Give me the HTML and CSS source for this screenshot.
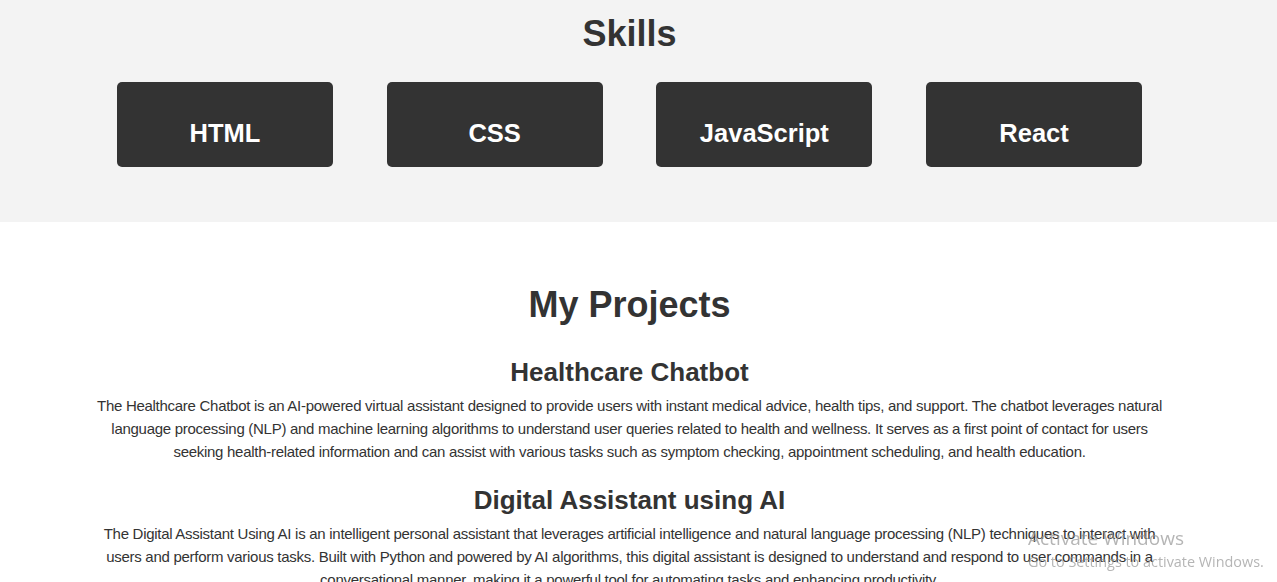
FILE: index.html
```html
<!DOCTYPE html>
<html lang="en">
<head>
<meta charset="utf-8">
<title>Portfolio</title>
<link rel="stylesheet" href="styles.css">
</head>
<body>
<section class="skills">
  <div class="wrap">
    <h2 class="section-title">Skills</h2>
    <div class="skill-list">
      <div class="skill"><h3>HTML</h3></div>
      <div class="skill"><h3>CSS</h3></div>
      <div class="skill"><h3>JavaScript</h3></div>
      <div class="skill"><h3>React</h3></div>
    </div>
  </div>
</section>
<section class="projects">
  <div class="wrap">
    <h2 class="section-title">My Projects</h2>
    <div class="project">
      <h3>Healthcare Chatbot</h3>
      <p>The Healthcare Chatbot is an AI-powered virtual assistant designed to provide users with instant medical advice, health tips, and support. The chatbot leverages natural language processing (NLP) and machine learning algorithms to understand user queries related to health and wellness. It serves as a first point of contact for users seeking health-related information and can assist with various tasks such as symptom checking, appointment scheduling, and health education.</p>
    </div>
    <div class="project">
      <h3>Digital Assistant using AI</h3>
      <p>The Digital Assistant Using AI is an intelligent personal assistant that leverages artificial intelligence and natural language processing (NLP) techniques to interact with users and perform various tasks. Built with Python and powered by AI algorithms, this digital assistant is designed to understand and respond to user commands in a conversational manner, making it a powerful tool for automating tasks and enhancing productivity.</p>
    </div>
  </div>
</section>
<div class="watermark">
  <div class="wm-title">Activate Windows</div>
  <div class="wm-sub">Go to Settings to activate Windows.</div>
</div>
</body>
</html>
```

FILE: styles.css
```css
* { box-sizing: border-box; }

body {
  margin: 0;
  font-family: "Liberation Sans", Arial, sans-serif;
  color: #333;
  background: #fff;
}

.wrap {
  width: 1259px;
}

.section-title {
  margin: 0;
  font-size: 36px;
  line-height: 42px;
  font-weight: bold;
  text-align: center;
  color: #333;
}

.skills {
  background: #f3f3f3;
  padding: 13px 0 55px;
}

.skill-list {
  display: flex;
  justify-content: center;
  gap: 53.7px;
  margin-top: 27px;
}

.skill {
  width: 216px;
  height: 85px;
  background: #333;
  border-radius: 5px;
  padding-top: 36px;
  text-align: center;
}

.skill h3 {
  margin: 0;
  color: #fff;
  font-size: 25.5px;
  line-height: 30px;
  font-weight: bold;
}

.projects {
  padding: 62px 0 0;
}

.projects .section-title {
  margin-bottom: 31px;
}

.project {
  max-width: 1080px;
  margin: 0 auto 22px;
  text-align: center;
}

.project h3 {
  margin: 0 0 7px;
  font-size: 26px;
  line-height: 30px;
  font-weight: bold;
}

.project p {
  margin: 0;
  font-size: 15px;
  line-height: 23px;
  letter-spacing: -0.28px;
}

.watermark {
  position: fixed;
  left: 1028px;
  top: 526px;
  color: rgba(150, 150, 150, 0.7);
  font-family: "Open Sans", "Noto Sans", sans-serif;
  pointer-events: none;
}

.wm-title {
  font-size: 19px;
  line-height: 25px;
}

.wm-sub {
  font-size: 14.4px;
  line-height: 21px;
}
```
